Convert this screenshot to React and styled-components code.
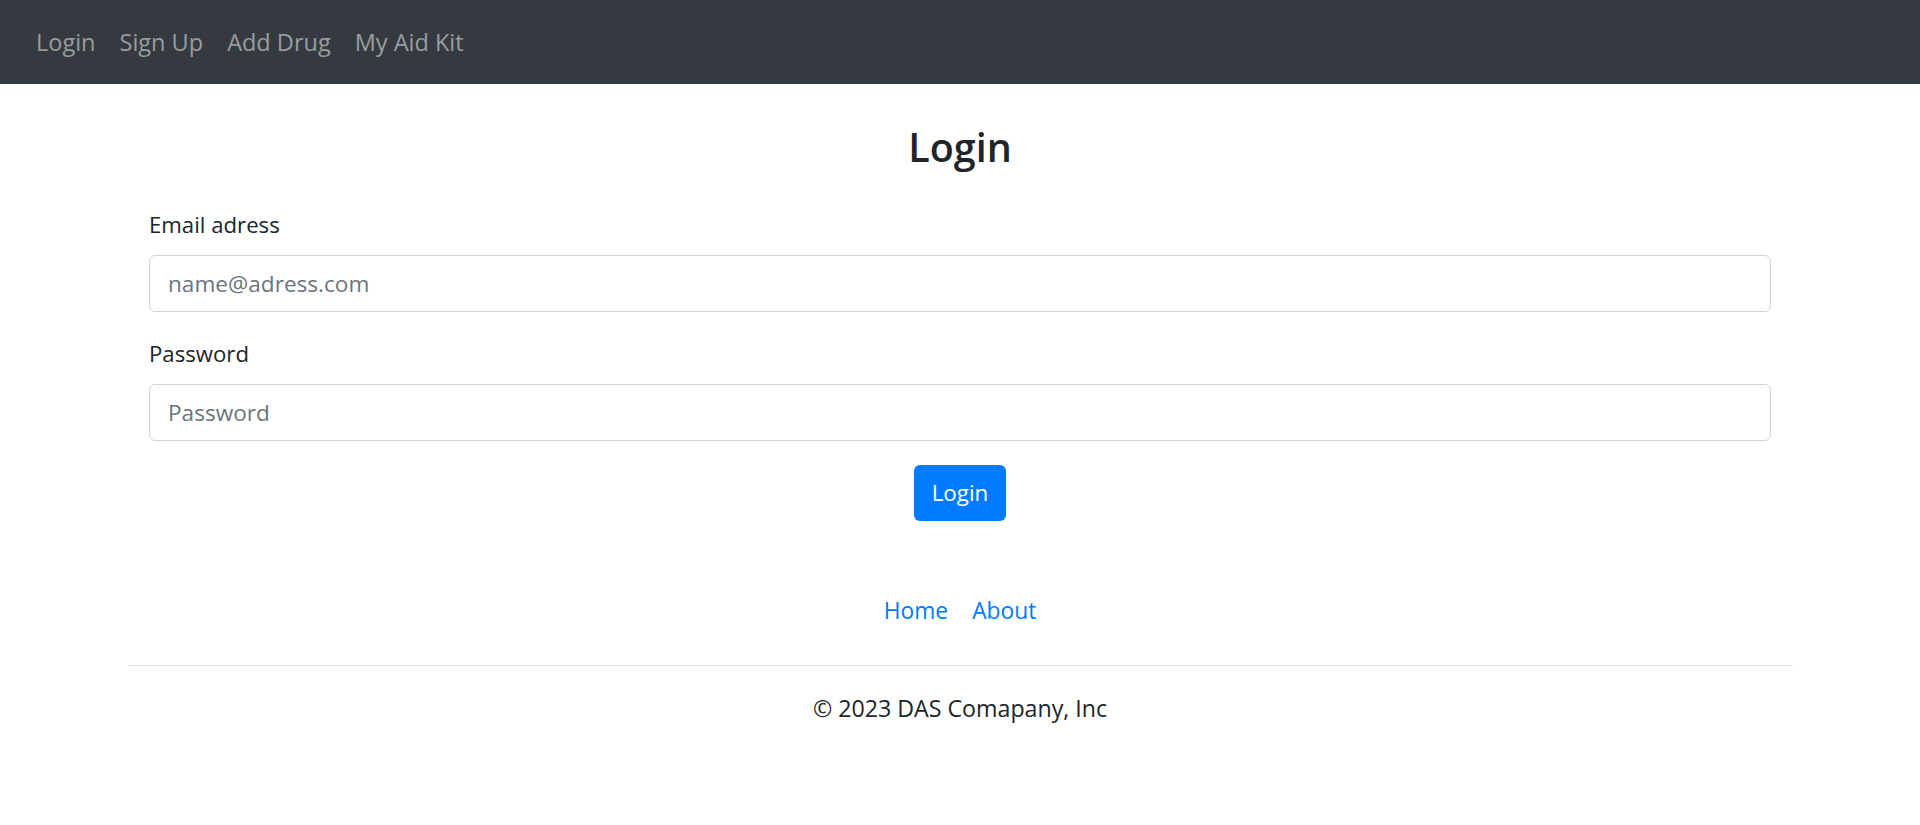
import React from "react";
import styled, { createGlobalStyle } from "styled-components";

const GlobalStyle = createGlobalStyle`
  body {
    margin: 0;
    background: #fff;
    color: #212529;
    font-family: "Open Sans", "Noto Sans", sans-serif;
    font-size: 22px;
    line-height: 36px;
  }
  * {
    box-sizing: border-box;
  }
`;

const links = ["Login", "Sign Up", "Add Drug", "My Aid Kit"];

export default function App() {
  return (
    <>
      <GlobalStyle />
      <Navbar>
        {links.map((l) => (
          <NavLink key={l} href="#">
            {l}
          </NavLink>
        ))}
      </Navbar>
      <Container>
        <Title>Login</Title>
        <Form onSubmit={(e) => e.preventDefault()}>
          <FormGroup>
            <Label htmlFor="email">Email adress</Label>
            <Input id="email" type="email" placeholder="name@adress.com" />
          </FormGroup>
          <FormGroup>
            <Label htmlFor="password">Password</Label>
            <Input id="password" type="password" placeholder="Password" />
          </FormGroup>
          <ButtonRow>
            <PrimaryButton type="submit">Login</PrimaryButton>
          </ButtonRow>
        </Form>
        <Footer>
          <FooterNav>
            <FooterLink href="#">Home</FooterLink>
            <FooterLink href="#">About</FooterLink>
          </FooterNav>
          <Copyright>© 2023 DAS Comapany, Inc</Copyright>
        </Footer>
      </Container>
    </>
  );
}

const Navbar = styled.nav`
  display: flex;
  align-items: center;
  padding: 12px 24px;
  background: #343a40;
`;

const NavLink = styled.a`
  padding: 12px;
  color: rgba(255, 255, 255, 0.5);
  font-size: 23.5px;
  line-height: 36px;
  text-decoration: none;
`;

const Container = styled.main`
  max-width: 1710px;
  margin: 0 auto;
  padding: 0 22.5px;
`;

const Title = styled.h3`
  margin: 38px 0 35px;
  text-align: center;
  font-size: 39.5px;
  font-weight: 600;
  line-height: 50px;
`;

const Form = styled.form`
  padding: 0 21.5px;
`;

const FormGroup = styled.div`
  margin-bottom: 24px;
`;

const Label = styled.label`
  display: block;
  margin-bottom: 12px;
  font-size: 22.2px;
  line-height: 36px;
`;

const Input = styled.input`
  display: block;
  width: 100%;
  height: 57px;
  padding: 9px 18px;
  border: 1px solid #ced4da;
  border-radius: 6px;
  font-family: inherit;
  font-size: 22.6px;
  color: #495057;
  outline: none;

  &::placeholder {
    color: #6c757d;
  }
`;

const ButtonRow = styled.div`
  display: flex;
  justify-content: center;
`;

const PrimaryButton = styled.button`
  padding: 10px 18px;
  border: none;
  border-radius: 6px;
  background: #007bff;
  color: #fff;
  font-family: inherit;
  font-size: 22.4px;
  line-height: 36px;
  cursor: pointer;
`;

const Footer = styled.footer`
  margin-top: 36px;
  padding: 24px 0;
`;

const FooterNav = styled.nav`
  display: flex;
  justify-content: center;
  padding-bottom: 24px;
  margin-bottom: 24px;
  border-bottom: 1px solid #dee2e6;
`;

const FooterLink = styled.a`
  padding: 12px;
  color: #007bff;
  text-decoration: none;
  font-size: 22.8px;
  line-height: 36px;
`;

const Copyright = styled.p`
  margin: 0;
  text-align: center;
  font-size: 23.2px;
  line-height: 36px;
`;
